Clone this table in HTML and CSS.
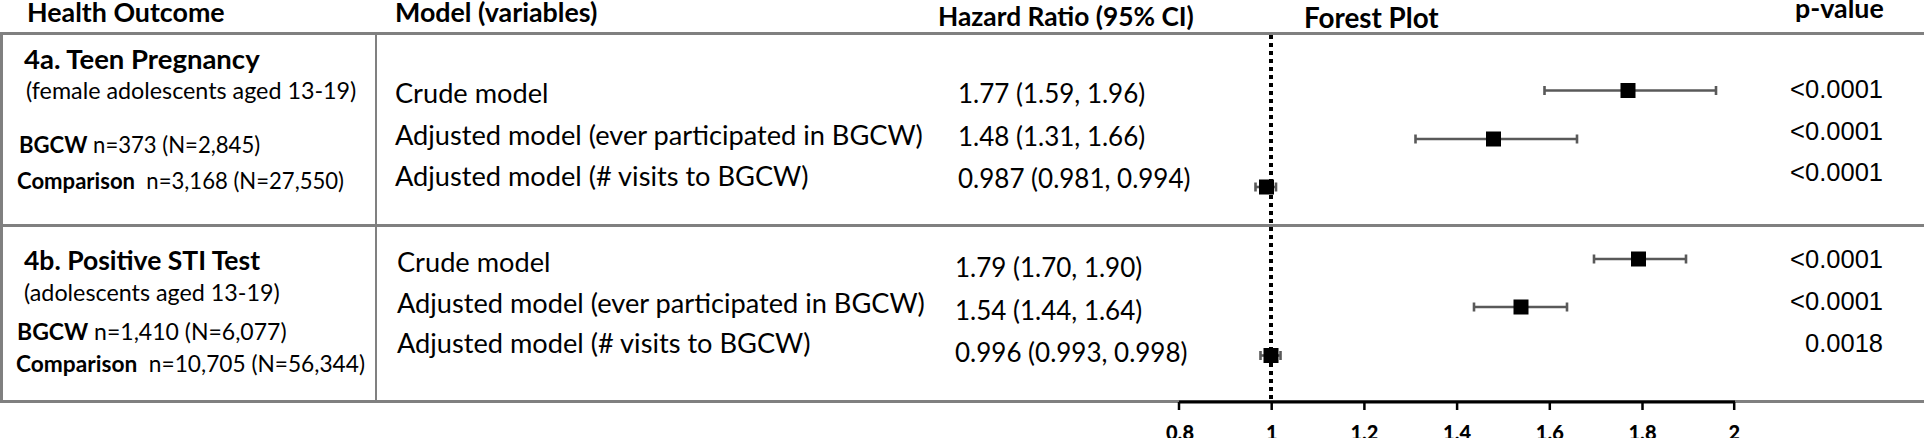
FILE: index.html
```html
<!DOCTYPE html>
<html lang="en">
<head>
<meta charset="utf-8">
<title>Boys &amp; Girls Club – Forest Plot</title>
<link rel="stylesheet" href="styles.css">
</head>
<body>
<div class="figure">
  <div class="head">
    <div class="hcell h-outcome">Health Outcome</div>
    <div class="hcell h-model">Model (variables)</div>
    <div class="hcell h-hr">Hazard Ratio (95% CI)</div>
    <div class="hcell h-plot">Forest Plot</div>
    <div class="hcell h-p">p-value</div>
  </div>

  <div class="table">
    <div class="row r1">
      <div class="outcome">
        <div class="title">4a. Teen Pregnancy</div>
        <div class="sub">(female adolescents aged 13-19)</div>
        <div class="count c-bgcw"><b>BGCW</b> n=373 (N=2,845)</div>
        <div class="count c-comp"><b>Comparison</b>&nbsp; n=3,168 (N=27,550)</div>
      </div>
      <div class="models">
        <div>Crude model</div>
        <div>Adjusted model (ever participated in BGCW)</div>
        <div>Adjusted model (# visits to BGCW)</div>
      </div>
      <div class="hrs">
        <div>1.77 (1.59, 1.96)</div>
        <div>1.48 (1.31, 1.66)</div>
        <div>0.987 (0.981, 0.994)</div>
      </div>
      <div class="plot"></div>
      <div class="pvals">
        <div>&lt;0.0001</div>
        <div>&lt;0.0001</div>
        <div>&lt;0.0001</div>
      </div>
    </div>

    <div class="row r2">
      <div class="outcome">
        <div class="title">4b. Positive STI Test</div>
        <div class="sub">(adolescents aged 13-19)</div>
        <div class="count c-bgcw"><b>BGCW</b> n=1,410 (N=6,077)</div>
        <div class="count c-comp"><b>Comparison</b>&nbsp; n=10,705 (N=56,344)</div>
      </div>
      <div class="models">
        <div>Crude model</div>
        <div>Adjusted model (ever participated in BGCW)</div>
        <div>Adjusted model (# visits to BGCW)</div>
      </div>
      <div class="hrs">
        <div>1.79 (1.70, 1.90)</div>
        <div>1.54 (1.44, 1.64)</div>
        <div>0.996 (0.993, 0.998)</div>
      </div>
      <div class="plot"></div>
      <div class="pvals">
        <div>&lt;0.0001</div>
        <div>&lt;0.0001</div>
        <div>0.0018</div>
      </div>
    </div>
  </div>

  <svg class="forest" viewBox="0 0 1924 438" width="1924" height="438" aria-hidden="true">
    <line class="ref" x1="1271" y1="35" x2="1271" y2="401"/>

    <g class="ci">
      <line x1="1544.5" y1="90.5" x2="1716" y2="90.5"/>
      <line x1="1544.5" y1="86" x2="1544.5" y2="95"/>
      <line x1="1716" y1="86" x2="1716" y2="95"/>

      <line x1="1415.5" y1="139" x2="1577" y2="139"/>
      <line x1="1415.5" y1="134.5" x2="1415.5" y2="143.5"/>
      <line x1="1577" y1="134.5" x2="1577" y2="143.5"/>

      <line x1="1255.5" y1="187" x2="1276" y2="187"/>
      <line x1="1255.5" y1="182.5" x2="1255.5" y2="191.5"/>
      <line x1="1276" y1="182.5" x2="1276" y2="191.5"/>

      <line x1="1594" y1="259" x2="1686" y2="259"/>
      <line x1="1594" y1="254.5" x2="1594" y2="263.5"/>
      <line x1="1686" y1="254.5" x2="1686" y2="263.5"/>

      <line x1="1474" y1="307" x2="1567" y2="307"/>
      <line x1="1474" y1="302.5" x2="1474" y2="311.5"/>
      <line x1="1567" y1="302.5" x2="1567" y2="311.5"/>

      <line x1="1260.5" y1="355.5" x2="1280.5" y2="355.5"/>
      <line x1="1260.5" y1="351" x2="1260.5" y2="360"/>
      <line x1="1280.5" y1="351" x2="1280.5" y2="360"/>
    </g>

    <g class="pt">
      <rect x="1620.5" y="83" width="15" height="15"/>
      <rect x="1486" y="131.5" width="15" height="15"/>
      <rect x="1259" y="179.5" width="15" height="15"/>
      <rect x="1631" y="251.5" width="15" height="15"/>
      <rect x="1513.5" y="299.5" width="15" height="15"/>
      <rect x="1263.5" y="348" width="15" height="15"/>
    </g>

    <line class="axis" x1="1179" y1="402" x2="1735" y2="402"/>
    <g class="ticks">
      <line x1="1179" y1="402" x2="1179" y2="410"/>
      <line x1="1271.7" y1="402" x2="1271.7" y2="410"/>
      <line x1="1364.4" y1="402" x2="1364.4" y2="410"/>
      <line x1="1457.1" y1="402" x2="1457.1" y2="410"/>
      <line x1="1549.8" y1="402" x2="1549.8" y2="410"/>
      <line x1="1642.5" y1="402" x2="1642.5" y2="410"/>
      <line x1="1734.2" y1="402" x2="1734.2" y2="410"/>
    </g>
    <g class="labels">
      <text x="1180" y="440">0.8</text>
      <text x="1271.7" y="440">1</text>
      <text x="1364.4" y="440">1.2</text>
      <text x="1457.1" y="440">1.4</text>
      <text x="1549.8" y="440">1.6</text>
      <text x="1642.5" y="440">1.8</text>
      <text x="1734.2" y="440">2</text>
    </g>
  </svg>
</div>
</body>
</html>
```

FILE: styles.css
```css
html, body {
  margin: 0;
  padding: 0;
}

body {
  background: #ffffff;
  color: #000000;
  font-family: Lato, "Open Sans", "Liberation Sans", sans-serif;
}

.figure {
  position: relative;
  width: 1924px;
  height: 438px;
  overflow: hidden;
}

/* ---------- header ---------- */
.head {
  display: grid;
  grid-template-columns: 377px 559px 304px 520px 164px;
  height: 32px;
  font-weight: 700;
  font-size: 26.8px;
  line-height: 24px;
  white-space: nowrap;
}

.h-outcome { padding-left: 27px; }
.h-model   { padding-left: 18px; }
.h-hr      { padding: 4px 0 0 2px; font-size: 26.3px; }
.h-plot    { padding: 6px 0 0 64px; font-size: 27.8px; }
.h-p       { padding-left: 35px; line-height: 16px; }

/* ---------- table ---------- */
.table {
  width: 1923px;
  border: 3px solid #808080;
}

.row {
  display: grid;
  grid-template-columns: 374px 559px 304px 520px 160px;
  white-space: nowrap;
}

.row + .row {
  border-top: 3px solid #808080;
}

.r1 { height: 189px; }
.r2 { height: 173px; }

/* outcome column */
.outcome {
  border-right: 2px solid #808080;
}

.outcome > div {
  line-height: 30px;
}

.title {
  font-weight: 700;
  font-size: 26.5px;
}

.sub {
  font-size: 23.3px;
}

.count {
  font-size: 22.1px;
}

.count b {
  font-weight: 700;
}

.r1 .outcome { padding-top: 9px; }
.r1 .title   { padding-left: 21px; font-size: 27.5px; }
.r1 .sub     { padding-left: 23px; margin-top: 1px; }
.r1 .c-bgcw  { padding-left: 16px; margin-top: 25px; }
.r1 .c-comp  { padding-left: 14px; margin-top: 6px; }

.r2 .outcome { padding-top: 18px; }
.r2 .title   { padding-left: 21px; }
.r2 .sub     { padding-left: 21px; margin-top: 2px; }
.r2 .count   { font-size: 23px; }
.r2 .c-bgcw  { padding-left: 14px; margin-top: 9px; }
.r2 .c-comp  { padding-left: 13px; margin-top: 3px; font-size: 22.7px; }

/* model column */
.models {
  display: flex;
  flex-direction: column;
  font-size: 27.2px;
}

.r1 .models { padding: 37px 0 0 18px; line-height: 41.5px; }
.r2 .models { padding: 15px 0 0 20px; line-height: 40.5px; }

/* hazard ratio column */
.hrs {
  display: flex;
  flex-direction: column;
  font-size: 26px;
}

.r1 .hrs { padding: 37px 0 0 22px; line-height: 42.5px; }
.r2 .hrs { padding: 19px 0 0 19px; line-height: 42.5px; }

/* p-value column */
.pvals {
  display: flex;
  flex-direction: column;
  align-items: flex-end;
  padding-right: 37px;
  font-family: "Liberation Sans", Arial, sans-serif;
  font-size: 25.5px;
}

.r1 .pvals { padding-top: 34px; line-height: 41.5px; }
.r2 .pvals { padding-top: 11px; line-height: 42px; }

/* ---------- forest plot overlay ---------- */
.forest {
  position: absolute;
  left: 0;
  top: 0;
  pointer-events: none;
}

.forest .ref {
  stroke: #000000;
  stroke-width: 4;
  stroke-dasharray: 4 4;
}

.forest .ci line {
  stroke: #595959;
  stroke-width: 2.6;
}

.forest .pt rect {
  fill: #000000;
}

.forest .axis {
  stroke: #000000;
  stroke-width: 3;
}

.forest .ticks line {
  stroke: #000000;
  stroke-width: 2.5;
}

.forest .labels text {
  font-family: Lato, "Liberation Sans", sans-serif;
  font-weight: 900;
  font-size: 20px;
  text-anchor: middle;
  fill: #000000;
}
```
